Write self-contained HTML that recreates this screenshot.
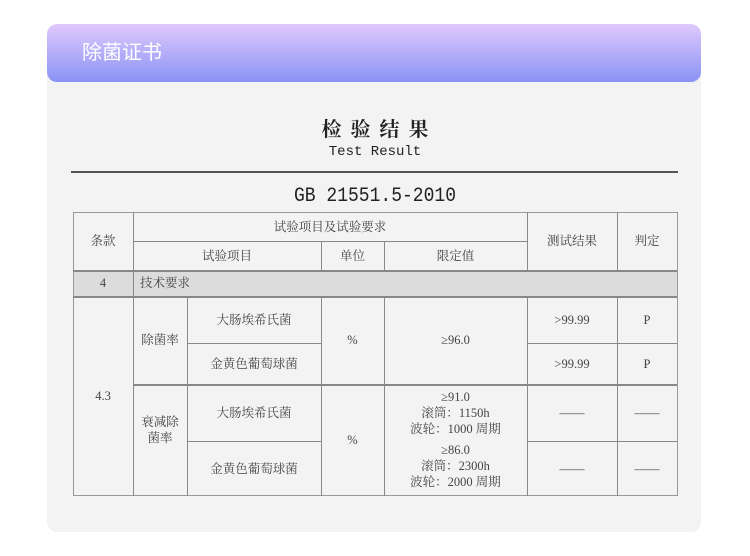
<!DOCTYPE html>
<html><head><meta charset="utf-8"><style>
*{margin:0;padding:0;box-sizing:border-box}
body{width:750px;height:556px;background:#fff;position:relative;overflow:hidden;font-family:"Liberation Serif","Noto Serif CJK SC",serif;color:#333}
.card{position:absolute;left:47px;top:24px;width:654px;height:508px;background:#f3f3f3;border-radius:10px;overflow:hidden}
.hd{position:absolute;left:0;top:0;width:654px;height:58px;background:linear-gradient(#e0c9fd,#8a93f5);border-radius:10px;color:#fff;font-family:"Liberation Sans","Noto Sans CJK SC",sans-serif;font-size:20px;line-height:58px;padding-left:35px}
.a{position:absolute;display:flex;align-items:center;justify-content:center;text-align:center;font-size:12.5px;color:#444;line-height:16px}
.h{position:absolute;background:#888}
</style></head><body>
<div class="card"><div class="hd">除菌证书</div></div>
<div class="a" style="left:0;width:750px;top:115px;height:26px;font-family:'Noto Serif CJK SC',serif;font-size:20px;font-weight:bold;letter-spacing:9px;color:#222;padding-left:9px">检验结果</div>
<div class="a" style="left:0;width:750px;top:143px;height:18px;font-family:'Liberation Mono',monospace;font-size:14px;color:#222">Test Result</div>
<div class="h" style="left:71px;top:171px;width:607px;height:2px;background:#555"></div>
<div class="a" style="left:0;width:750px;top:185px;height:24px;font-family:'Liberation Mono',monospace;font-size:20px;color:#222;transform:scaleX(.9)">GB 21551.5-2010</div>
<!-- table -->
<div style="position:absolute;left:73px;top:270px;width:604px;height:26px;background:#dcdcdc"></div>
<div style="position:absolute;left:73px;top:212px;width:605px;height:284px;border:1.5px solid #999"></div>
<!-- horizontal lines -->
<div class="h" style="left:133px;top:241px;width:394px;height:1px"></div>
<div class="h" style="left:73px;top:270px;width:604px;height:1.5px"></div>
<div class="h" style="left:73px;top:296px;width:604px;height:1.5px"></div>
<div class="h" style="left:187px;top:343px;width:134px;height:1px"></div>
<div class="h" style="left:527px;top:343px;width:150px;height:1px"></div>
<div class="h" style="left:133px;top:384px;width:544px;height:1.5px"></div>
<div class="h" style="left:187px;top:441px;width:134px;height:1px"></div>
<div class="h" style="left:527px;top:441px;width:150px;height:1px"></div>
<!-- vertical lines -->
<div class="h" style="left:133px;top:212px;width:1px;height:284px"></div>
<div class="h" style="left:187px;top:296px;width:1px;height:200px"></div>
<div class="h" style="left:321px;top:241px;width:1px;height:29px"></div>
<div class="h" style="left:321px;top:296px;width:1px;height:200px"></div>
<div class="h" style="left:384px;top:241px;width:1px;height:29px"></div>
<div class="h" style="left:384px;top:296px;width:1px;height:200px"></div>
<div class="h" style="left:527px;top:212px;width:1px;height:58px"></div>
<div class="h" style="left:527px;top:296px;width:1px;height:200px"></div>
<div class="h" style="left:617px;top:212px;width:1px;height:58px"></div>
<div class="h" style="left:617px;top:296px;width:1px;height:200px"></div>
<!-- text -->
<div class="a" style="left:73px;width:60px;top:212px;height:58px">条款</div>
<div class="a" style="left:133px;width:394px;top:212px;height:29px">试验项目及试验要求</div>
<div class="a" style="left:133px;width:188px;top:241px;height:29px">试验项目</div>
<div class="a" style="left:321px;width:63px;top:241px;height:29px">单位</div>
<div class="a" style="left:384px;width:143px;top:241px;height:29px">限定值</div>
<div class="a" style="left:527px;width:90px;top:212px;height:58px">测试结果</div>
<div class="a" style="left:617px;width:60px;top:212px;height:58px">判定</div>
<div class="a" style="left:73px;width:60px;top:270px;height:26px">4</div>
<div class="a" style="left:140px;top:270px;height:26px">技术要求</div>
<div class="a" style="left:73px;width:60px;top:296px;height:200px">4.3</div>
<div class="a" style="left:133px;width:54px;top:296px;height:88px">除菌率</div>
<div class="a" style="left:187px;width:134px;top:296px;height:47px">大肠埃希氏菌</div>
<div class="a" style="left:187px;width:134px;top:343px;height:41px">金黄色葡萄球菌</div>
<div class="a" style="left:321px;width:63px;top:296px;height:88px">%</div>
<div class="a" style="left:384px;width:143px;top:296px;height:88px">≥96.0</div>
<div class="a" style="left:527px;width:90px;top:296px;height:47px">&gt;99.99</div>
<div class="a" style="left:527px;width:90px;top:343px;height:41px">&gt;99.99</div>
<div class="a" style="left:617px;width:60px;top:296px;height:47px">P</div>
<div class="a" style="left:617px;width:60px;top:343px;height:41px">P</div>
<div class="a" style="left:133px;width:54px;top:410px;height:40px">衰减除<br>菌率</div>
<div class="a" style="left:187px;width:134px;top:384px;height:57px">大肠埃希氏菌</div>
<div class="a" style="left:187px;width:134px;top:441px;height:55px">金黄色葡萄球菌</div>
<div class="a" style="left:321px;width:63px;top:384px;height:112px">%</div>
<div class="a" style="left:384px;width:143px;top:386px;height:54px">≥91.0<br>滚筒：1150h<br>波轮：1000 周期</div>
<div class="a" style="left:384px;width:143px;top:439px;height:54px">≥86.0<br>滚筒：2300h<br>波轮：2000 周期</div>
<div class="a" style="left:527px;width:90px;top:384px;height:57px">——</div>
<div class="a" style="left:527px;width:90px;top:441px;height:55px">——</div>
<div class="a" style="left:617px;width:60px;top:384px;height:57px">——</div>
<div class="a" style="left:617px;width:60px;top:441px;height:55px">——</div>
</body></html>
